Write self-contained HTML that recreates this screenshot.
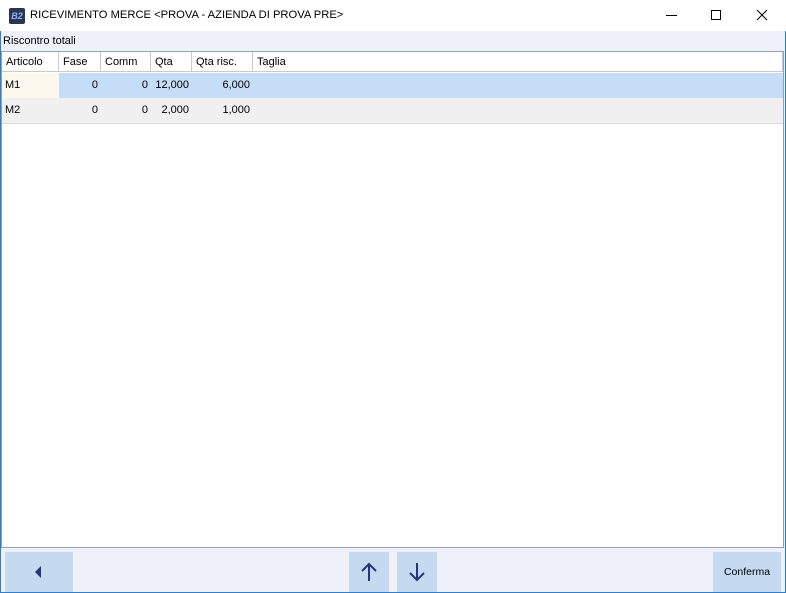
<!DOCTYPE html>
<html><head><style>
body{margin:0;width:786px;height:593px;overflow:hidden;font-family:"Liberation Sans",sans-serif;font-size:11px;color:#000;background:#eef1f9;position:relative}
.abs{position:absolute}
.title{left:0;top:0;width:786px;height:31px;background:#fff}
.grid{left:1px;top:51px;width:781px;height:495px;background:#fff;border:1px solid #8fa2b8}
.hdr{position:absolute;top:0;height:20px;border-right:1px solid #c8ccd2;border-bottom:1px solid #c8ccd2;line-height:20px;padding-left:4px;box-sizing:border-box;background:#fff}
.cell{position:absolute;height:25px;line-height:25px;box-sizing:border-box;padding-right:3px;text-align:right}
.btn{position:absolute;top:552px;height:41px;background:#c5d9f1}
</style></head><body>
<div class="abs title">
 <div class="abs" style="left:9px;top:8px;width:16px;height:16px;background:#2b3550;border-radius:2px;color:#8fb0ff;font-size:9px;font-style:italic;line-height:16px;text-align:center;font-weight:bold">B2</div>
 <div class="abs" style="left:30px;top:9px;font-size:11.2px">RICEVIMENTO MERCE &lt;PROVA - AZIENDA DI PROVA PRE&gt;</div>
 <div class="abs" style="left:666px;top:15px;width:11px;height:1px;background:#000"></div>
 <div class="abs" style="left:711px;top:10px;width:8px;height:8px;border:1px solid #000"></div>
 <svg class="abs" style="left:756px;top:9px" width="12" height="12"><path d="M1 1L11 11M11 1L1 11" stroke="#000" stroke-width="1"/></svg>
</div>
<div class="abs" style="left:3px;top:35px">Riscontro totali</div>
<div class="abs grid">
 <div class="hdr" style="left:0;width:57px">Articolo</div>
 <div class="hdr" style="left:57px;width:42px">Fase</div>
 <div class="hdr" style="left:99px;width:50px">Comm</div>
 <div class="hdr" style="left:149px;width:41px">Qta</div>
 <div class="hdr" style="left:190px;width:61px">Qta risc.</div>
 <div class="hdr" style="left:251px;width:530px">Taglia</div>
 <div class="abs" style="left:0;top:21px;width:781px;height:25px;background:#c5ddf6"></div>
 <div class="abs" style="left:0;top:21px;width:57px;height:25px;background:#fdf8ee"></div>
 <div class="abs" style="left:0;top:46px;width:781px;height:25px;background:#f0f0f0;border-bottom:1px solid #d8dce2"></div>
 <div class="cell" style="left:3px;top:21px;text-align:left">M1</div>
 <div class="cell" style="left:57px;top:21px;width:42px">0</div>
 <div class="cell" style="left:99px;top:21px;width:50px">0</div>
 <div class="cell" style="left:149px;top:21px;width:41px">12,000</div>
 <div class="cell" style="left:190px;top:21px;width:61px">6,000</div>
 <div class="cell" style="left:3px;top:46px;text-align:left">M2</div>
 <div class="cell" style="left:57px;top:46px;width:42px">0</div>
 <div class="cell" style="left:99px;top:46px;width:50px">0</div>
 <div class="cell" style="left:149px;top:46px;width:41px">2,000</div>
 <div class="cell" style="left:190px;top:46px;width:61px">1,000</div>
</div>
<div class="btn" style="left:5px;width:68px"><svg class="abs" style="left:30px;top:14px" width="8" height="12"><path d="M6 0V12L0 6Z" fill="#24357a"/></svg></div>
<div class="btn" style="left:349px;width:40px"><svg class="abs" style="left:11px;top:10px" width="18" height="20"><path d="M9 19V2M2 9L9 2L16 9" stroke="#24357a" stroke-width="2" fill="none"/></svg></div>
<div class="btn" style="left:397px;width:40px"><svg class="abs" style="left:11px;top:10px" width="18" height="20"><path d="M9 1V18M2 11L9 18L16 11" stroke="#24357a" stroke-width="2" fill="none"/></svg></div>
<div class="btn" style="left:713px;width:68px;line-height:41px;text-align:center;font-size:10.5px">Conferma</div>
<div class="abs" style="left:0;top:592px;width:786px;height:1px;background:#2f7fcf"></div>
<div class="abs" style="left:785px;top:31px;width:1px;height:562px;background:#2f7fcf"></div>
<div class="abs" style="left:0;top:31px;width:1px;height:562px;background:#2f7fcf"></div>
</body></html>
